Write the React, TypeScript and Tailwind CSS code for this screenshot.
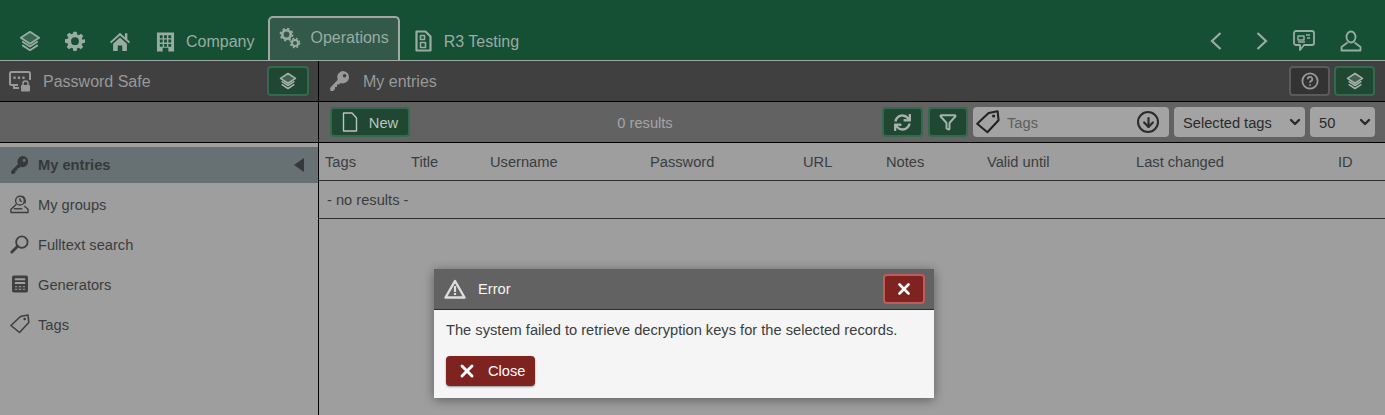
import { X, Funnel, ArrowDown, ChevronDown } from 'lucide-react';
import { FaSync } from 'react-icons/fa';

function Layers({ className = 'w-5 h-5' }: { className?: string }) {
  return (
    <svg viewBox="0 0 24 24" className={className} fill="none" stroke="currentColor" strokeWidth="2" strokeLinejoin="round">
      <path d="M12 2 22 8.5 12 15 2 8.5Z" fill="currentColor" fillOpacity="0.25" />
      <path d="M3.5 12.5 12 18l8.5-5.5" />
      <path d="M3.5 16.5 12 22l8.5-5.5" />
    </svg>
  );
}

function Gear({ className = 'w-5 h-5' }: { className?: string }) {
  return (
    <svg viewBox="0 0 24 24" className={className} fill="currentColor" fillRule="evenodd">
      <path d="M10 1h4l.6 3.2 1.9.8 2.7-1.8 2.8 2.8-1.8 2.7.8 1.9L24 10v4l-3.2.6-.8 1.9 1.8 2.7-2.8 2.8-2.7-1.8-1.9.8L14 24h-4l-.6-3.2-1.9-.8-2.7 1.8L2 19.2l1.8-2.7-.8-1.9L0 14v-4l3.2-.6.8-1.9L2.2 4.8 5 2l2.7 1.8 1.9-.8ZM12 7.5a4.7 4.7 0 1 0 0 9.4 4.7 4.7 0 0 0 0-9.4Z" />
    </svg>
  );
}

function House({ className = 'w-6 h-6' }: { className?: string }) {
  return (
    <svg viewBox="0 0 24 24" className={className} fill="currentColor">
      <path d="M12 3 1 13l1.4 1.5L12 6l9.6 8.5L23 13l-3-2.8V3.5h-2.6v4.3Z" />
      <path d="M4.5 15 12 8.3 19.5 15v8h-5v-6h-5v6h-5Z" />
    </svg>
  );
}

function Building({ className = 'w-5 h-5' }: { className?: string }) {
  return (
    <svg viewBox="0 0 20 21" className={className} fill="currentColor" fillRule="evenodd">
      <path d="M1 1h18v20h-6v-4H7v4H1ZM4 4v3h3V4Zm4.5 0v3h3V4ZM13 4v3h3V4ZM4 8.5v3h3v-3Zm4.5 0v3h3v-3Zm4.5 0v3h3v-3ZM4 13v3h3v-3Zm9 0v3h3v-3Zm-4.5 0v3h3v-3Z" />
    </svg>
  );
}

function Gears({ className = 'w-[22px] h-[22px]' }: { className?: string }) {
  return (
    <svg viewBox="0 0 22 22" className={className}>
      <circle cx="7.5" cy="7.5" r="4.2" fill="none" stroke="currentColor" strokeWidth="2.6" />
      <circle cx="7.5" cy="7.5" r="6" fill="none" stroke="currentColor" strokeWidth="1.8" strokeDasharray="2.2 2.5" />
      <circle cx="16" cy="16" r="3" fill="none" stroke="currentColor" strokeWidth="2" />
      <circle cx="16" cy="16" r="4.5" fill="none" stroke="currentColor" strokeWidth="1.6" strokeDasharray="1.8 1.8" />
    </svg>
  );
}

function ReportDoc({ className = 'w-[19px] h-[22px]' }: { className?: string }) {
  return (
    <svg viewBox="0 0 19 22" className={className} fill="none" stroke="currentColor" strokeWidth="2.2" strokeLinejoin="round">
      <path d="M2.5 1.5h9l5 5v14h-14Z" />
      <path d="M6.5 5.5h4v4h-4ZM6.5 12.5h5v5h-5Z" strokeWidth="1.6" />
    </svg>
  );
}

function ChatBox({ className = 'w-[22px] h-[22px]' }: { className?: string }) {
  return (
    <svg viewBox="0 0 22 22" className={className} fill="none" stroke="currentColor" strokeWidth="1.8" strokeLinejoin="round">
      <path d="M3 1h16a2 2 0 0 1 2 2v10a2 2 0 0 1-2 2h-8l-4 5v-5H3a2 2 0 0 1-2-2V3a2 2 0 0 1 2-2Z" />
      <path d="M5 6h6v4H5ZM13 5h4M14 8h3M5 12h7" strokeWidth="1.5" />
    </svg>
  );
}

function Person({ className = 'w-[22px] h-[22px]' }: { className?: string }) {
  return (
    <svg viewBox="0 0 22 22" className={className} fill="none" stroke="currentColor" strokeWidth="1.8" strokeLinejoin="round">
      <ellipse cx="11" cy="7" rx="4.5" ry="5.5" />
      <path d="M7.5 12.5 1.5 17v3.5h19V17l-6-4.5" />
    </svg>
  );
}

function NavChevron({ dir }: { dir: 'left' | 'right' }) {
  return (
    <svg viewBox="0 0 13 18" className="h-[18px] w-[13px]" fill="none" stroke="currentColor" strokeWidth="2.2">
      <path d={dir === 'left' ? 'M11.5 1 3 9l8.5 8' : 'M1.5 1 10 9l-8.5 8'} />
    </svg>
  );
}

function SafeIcon({ className = 'w-[22px] h-[22px]' }: { className?: string }) {
  return (
    <svg viewBox="0 0 22 22" className={className} fill="none" stroke="currentColor">
      <path d="M9 15H2.5A1.5 1.5 0 0 1 1 13.5v-10A1.5 1.5 0 0 1 2.5 2h17A1.5 1.5 0 0 1 21 3.5V10" strokeWidth="2" />
      <path d="M5.5 6.5v2.4M10 6.5v2.4M14.5 6.5v2.4" strokeWidth="2.2" />
      <path d="M5 15v3h5" strokeWidth="2" />
      <rect x="12" y="15" width="9" height="6.5" rx="1" fill="currentColor" stroke="none" />
      <path d="M14 15v-1.5a2.5 2.5 0 0 1 5 0V15" strokeWidth="1.5" />
    </svg>
  );
}

function KeyIcon({ className = 'w-5 h-5' }: { className?: string }) {
  return (
    <svg viewBox="0 0 20 20" className={className} fill="currentColor" fillRule="evenodd">
      <path d="M13 0a6.2 6.2 0 1 1-2.4 12L9 13.5H7V16H5v2.2L3 20H0.5L0 17l7.8-8.2A6.2 6.2 0 0 1 13 0Zm1.6 3a1.8 1.8 0 1 0 0 3.6 1.8 1.8 0 0 0 0-3.6Z" />
    </svg>
  );
}

function GroupIcon({ className = 'w-5 h-5' }: { className?: string }) {
  return (
    <svg viewBox="0 0 20 20" className={className} fill="none" stroke="currentColor" strokeWidth="1.5" strokeLinejoin="round">
      <circle cx="10.5" cy="6" r="4.6" />
      <path d="M10.5 3.5V6l2 1" />
      <path d="M13 1.2A6 6 0 0 1 15.5 9" />
      <path d="M6.5 10 1 15v3.5h18V15l-4-3.5" />
      <path d="M4 14.5h9" />
    </svg>
  );
}

function SearchIcon({ className = 'w-5 h-5' }: { className?: string }) {
  return (
    <svg viewBox="0 0 20 20" className={className} fill="none" stroke="currentColor">
      <circle cx="12.5" cy="7.5" r="6" strokeWidth="1.9" />
      <path d="M7.8 12.2 2 18" strokeWidth="3" strokeLinecap="round" />
    </svg>
  );
}

function CalcIcon({ className = 'w-[17px] h-5' }: { className?: string }) {
  return (
    <svg viewBox="0 0 17 18" className={className} fill="currentColor" fillRule="evenodd">
      <path d="M2 0h13a2 2 0 0 1 2 2v14a2 2 0 0 1-2 2H2a2 2 0 0 1-2-2V2a2 2 0 0 1 2-2Zm1 3v2h11V3Zm0 4v2h11V7Zm0 4.500v1h2.500v-1Zm4 0v1h3v-1Zm4.500 0v1H14v-1ZM3 14v1h2.500v-1Zm4 0v1h3v-1Zm4.500 0v1H14v-1Z" />
    </svg>
  );
}

function TagIcon({ className = 'w-5 h-5', stroke = 1.6 }: { className?: string; stroke?: number }) {
  return (
    <svg viewBox="0 0 20 20" className={className} fill="none" stroke="currentColor" strokeWidth={stroke} strokeLinejoin="round">
      <path d="M1 11.5 10.5 2.500 18 1l.8 7.500L9.500 18.500Z" />
      <circle cx="14.7" cy="5" r="1.3" fill="currentColor" stroke="none" />
    </svg>
  );
}

function FileIcon({ className = 'w-4 h-5' }: { className?: string }) {
  return (
    <svg viewBox="0 0 16 20" className={className} fill="none" stroke="currentColor" strokeWidth="1.4" strokeLinejoin="round">
      <path d="M1.500 1h8.500l4.500 5v13h-13Z" />
    </svg>
  );
}

function WarnIcon({ className = 'w-[22px] h-5' }: { className?: string }) {
  return (
    <svg viewBox="0 0 22 20" className={className} fill="none" stroke="currentColor" strokeWidth="2.4" strokeLinejoin="round">
      <path d="M11 2 20.500 18.500h-19Z" />
      <path d="M11 7v6M11 14v2" strokeWidth="2.2" />
    </svg>
  );
}

function GreenBtn({ children, className = '' }: { children: React.ReactNode; className?: string }) {
  return (
    <div className={`flex h-[30px] items-center justify-center rounded-[4px] border-2 border-[#33694f] bg-[#1f4732] text-[#a6b3ab] ${className}`}>
      {children}
    </div>
  );
}

const columns = [
  { label: 'Tags', w: 'w-[86px]' },
  { label: 'Title', w: 'w-[79px]' },
  { label: 'Username', w: 'w-[160px]' },
  { label: 'Password', w: 'w-[153px]' },
  { label: 'URL', w: 'w-[83px]' },
  { label: 'Notes', w: 'w-[101px]' },
  { label: 'Valid until', w: 'w-[149px]' },
  { label: 'Last changed', w: 'w-[202px]' },
  { label: 'ID', w: 'w-[40px]' },
];

const sideItems = [
  { label: 'My groups', icon: <GroupIcon className="h-[19px] w-[19px]" /> },
  { label: 'Fulltext search', icon: <SearchIcon className="h-[19px] w-[19px]" /> },
  { label: 'Generators', icon: <CalcIcon className="ml-[2px] h-[18px] w-[16px]" /> },
  { label: 'Tags', icon: <TagIcon className="h-[20px] w-[20px]" /> },
];

export default function App() {
  return (
    <div className="relative flex h-[415px] w-[1385px] flex-col overflow-hidden bg-[#9e9e9e] font-['Liberation_Sans',Arial,sans-serif] text-[14.667px] text-[#3a3d40]">
      {/* top nav */}
      <div className="flex h-[60px] items-end bg-[#155035] pl-[19px] pr-[23px] text-[#9aaca1]">
        <div className="flex h-[38px] items-center gap-[24px] pb-[1px]">
          <Layers className="h-[22px] w-[22px]" />
          <Gear className="h-[20px] w-[20px]" />
          <House className="h-[22px] w-[22px]" />
        </div>
        <div className="ml-[25px] flex h-[38px] items-center gap-[11px] pr-[14px]">
          <Building className="h-[21px] w-[19px]" />
          <span className="pt-[2px] text-[16px]">Company</span>
        </div>
        <div className="flex h-[44px] items-start gap-[9px] rounded-t-[5px] border-2 border-b-0 border-[#a1a8a3] bg-[#33594a] pl-[9px] pr-[9px] pt-[9px]">
          <Gears />
          <span className="pt-[1px] text-[16px] leading-[20px]">Operations</span>
        </div>
        <div className="ml-[14px] flex h-[38px] items-center gap-[11px]">
          <ReportDoc />
          <span className="pt-[2px] text-[16px]">R3 Testing</span>
        </div>
        <div className="ml-auto flex h-[38px] items-center">
          <NavChevron dir="left" />
          <span className="ml-[34px]"><NavChevron dir="right" /></span>
          <span className="ml-[24px]"><ChatBox /></span>
          <span className="ml-[25px]"><Person /></span>
        </div>
      </div>
      <div className="h-px bg-[#a1a8a3]" />

      <div className="flex min-h-0 flex-1">
        {/* sidebar */}
        <div className="flex w-[319px] flex-none flex-col border-r border-black">
          <div className="flex h-[41px] flex-none items-center border-b border-black bg-[#404040] pl-[9px] pr-[9px] text-[#98999a]">
            <SafeIcon />
            <span className="ml-[12px] pt-[2px] text-[16px]">Password Safe</span>
            <GreenBtn className="ml-auto w-[42px]">
              <Layers className="h-[18px] w-[18px]" />
            </GreenBtn>
          </div>
          <div className="h-[41px] flex-none border-b border-black bg-[#626262]" />
          <div className="pt-[4px]">
            <div className="mb-[1px] flex h-[36px] items-center bg-[#677073] pl-[11px] pr-[14px] font-bold text-[#35393c]">
              <KeyIcon className="h-[18px] w-[18px]" />
              <span className="ml-[9px]">My entries</span>
              <svg viewBox="0 0 10 14" className="ml-auto h-[14px] w-[10px]" fill="currentColor"><path d="M10 0v14L0 7Z" /></svg>
            </div>
            {sideItems.map((item) => (
              <div key={item.label} className="flex h-[40px] items-center pl-[10px]">
                <span className="flex w-[28px] flex-none items-center text-[#3d3f41]">{item.icon}</span>
                <span className="pt-[2px]">{item.label}</span>
              </div>
            ))}
          </div>
        </div>

        {/* main */}
        <div className="flex min-w-0 flex-1 flex-col">
          <div className="flex h-[41px] flex-none items-center border-b border-black bg-[#404040] pl-[11px] pr-[10px] text-[#98999a]">
            <KeyIcon className="h-[20px] w-[20px]" />
            <span className="ml-[13px] pt-[2px] text-[16px]">My entries</span>
            <div className="ml-auto flex gap-[4px]">
              <div className="flex h-[30px] w-[41px] items-center justify-center rounded-[4px] border-2 border-[#5a5a5a] bg-[#333333]">
                <svg viewBox="0 0 20 20" className="h-[18px] w-[18px]" fill="none" stroke="currentColor" strokeWidth="2">
                  <circle cx="10" cy="10" r="8.500" />
                  <path d="M7.500 8a2.500 2.500 0 1 1 3.600 2.200c-.8.400-1.100.900-1.100 1.800M10 13.500v1.800" />
                </svg>
              </div>
              <GreenBtn className="w-[41px]">
                <Layers className="h-[18px] w-[18px]" />
              </GreenBtn>
            </div>
          </div>
          <div className="flex h-[41px] flex-none items-center border-b border-black bg-[#626262] pl-[11px] pr-[10px]">
            <GreenBtn className="w-[80px] gap-[11px] text-[#bac4be]">
              <FileIcon />
              <span className="pt-[2px]">New</span>
            </GreenBtn>
            <div className="flex-1 pr-[2px] pt-[2px] text-center text-[#a5a5a5]">0 results</div>
            <div className="flex items-center gap-[5px]">
              <GreenBtn className="w-[41px]">
                <FaSync className="h-[17px] w-[17px]" />
              </GreenBtn>
              <GreenBtn className="w-[40px]">
                <Funnel className="h-[18px] w-[18px]" strokeWidth={2.6} />
              </GreenBtn>
              <div className="flex h-[30px] w-[196px] items-center rounded-[4px] bg-[#a3a3a3] pl-[3px] pr-[10px] text-[#5e5e5e]">
                <TagIcon className="h-[24px] w-[24px] text-[#222]" stroke={1.7} />
                <span className="ml-[7px] pt-[2px]">Tags</span>
                <span className="ml-auto flex h-[22px] w-[22px] items-center justify-center rounded-full border-[2.5px] border-[#2b2b2b] text-[#2b2b2b]">
                  <ArrowDown className="h-[15px] w-[15px]" strokeWidth={3.4} />
                </span>
              </div>
              <div className="flex h-[30px] w-[131px] items-center rounded-[4px] bg-[#a3a3a3] pl-[9px] pr-[2px] text-[#2a2a2a]">
                <span className="pt-[2px]">Selected tags</span>
                <ChevronDown className="ml-auto h-[16px] w-[16px]" strokeWidth={3.6} />
              </div>
              <div className="flex h-[30px] w-[65px] items-center rounded-[4px] bg-[#a3a3a3] pl-[9px] pr-[2px] text-[#2a2a2a]">
                <span className="pt-[2px]">50</span>
                <ChevronDown className="ml-auto h-[16px] w-[16px]" strokeWidth={3.6} />
              </div>
            </div>
          </div>
          <div className="flex h-[38px] flex-none items-center border-b border-[#2e2e2e] pl-[6px]">
            {columns.map((c) => (
              <div key={c.label} className={`${c.w} flex-none`}>{c.label}</div>
            ))}
          </div>
          <div className="flex h-[38px] flex-none items-center border-b border-[#2e2e2e] pl-[8px] pt-[1px]">- no results -</div>
        </div>
      </div>

      {/* error dialog */}
      <div className="absolute left-[434px] top-[269px] w-[500px] bg-[#f5f5f5] shadow-[0_2px_10px_rgba(0,0,0,0.4)]">
        <div className="flex h-[41px] items-center border-b border-[#2a2a2a] bg-[#626262] pl-[10px] pr-[9px] text-[#f5f5f5]">
          <WarnIcon className="h-[20px] w-[22px] text-[#dedede]" />
          <span className="ml-[12px]">Error</span>
          <div className="ml-auto flex h-[30px] w-[42px] items-center justify-center rounded-[4px] border-2 border-[#c25b5b] bg-[#7f2320] text-white">
            <X className="h-[18px] w-[18px]" strokeWidth={3.500} />
          </div>
        </div>
        <div className="px-[12px] pb-[12px] pt-[10px]">
          <p className="leading-[20px] text-[#3a3d40]">The system failed to retrieve decryption keys for the selected records.</p>
          <div className="mt-[16px] flex h-[30px] w-[89px] items-center rounded-[4px] bg-[#7f2320] pl-[11px] text-white shadow-[0_1px_2px_rgba(0,0,0,0.4)]">
            <X className="h-[20px] w-[20px]" strokeWidth={3.500} />
            <span className="ml-[11px]">Close</span>
          </div>
        </div>
      </div>
    </div>
  );
}
